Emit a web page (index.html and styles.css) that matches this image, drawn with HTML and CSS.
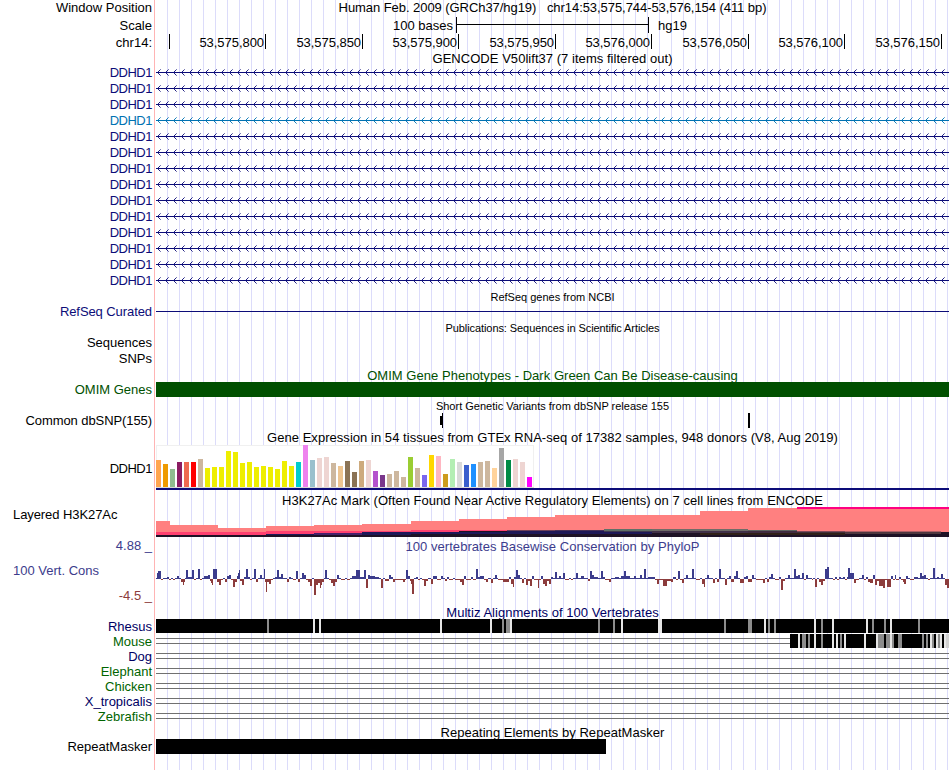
FILE: index.html
```html
<!DOCTYPE html>
<html lang="en">
<head>
    <meta charset="UTF-8">
    <meta name="viewport" content="width=device-width, initial-scale=1.0">
    <title>Human chr14:53,575,744-53,576,154 Genome Browser hg19</title>
    <link rel="stylesheet" href="styles.css">
</head>
<body>
    <main class="browser">
        <div class="row window-row">
            <div class="label">Window Position</div>
            <div class="title position">Human Feb. 2009 (GRCh37/hg19) &nbsp; chr14:53,575,744-53,576,154 (411 bp)</div>
        </div>
        <div class="row ruler-row">
            <div class="label">Scale</div>
            <div class="scale">
                <span class="scale-text">100 bases</span>
                <span class="scale-bar"></span>
                <span>hg19</span>
            </div>
        </div>
        <div class="row ruler-row">
            <div class="label">chr14:</div>
            <div class="coords" id="coords"></div>
        </div>

        <div class="row gencode-title">
            <div class="label"></div>
            <div class="title">GENCODE V50lift37 (7 items filtered out)</div>
        </div>
        <div id="genes"></div>

        <div class="row refseq-title">
            <div class="label"></div>
            <div class="title small">RefSeq genes from NCBI</div>
        </div>
        <div class="row gene-row navy">
            <div class="label tight">RefSeq Curated</div>
            <div class="intron"></div>
        </div>

        <div class="row pubs-title">
            <div class="label"></div>
            <div class="title small pubs">Publications: Sequences in Scientific Articles</div>
        </div>
        <div class="row pubs-row"><div class="label">Sequences</div></div>
        <div class="row pubs-row"><div class="label">SNPs</div></div>

        <div class="row omim-title green">
            <div class="label"></div>
            <div class="title">OMIM Gene Phenotypes - Dark Green Can Be Disease-causing</div>
        </div>
        <div class="row block-row green">
            <div class="label">OMIM Genes</div>
            <div class="block omim"></div>
        </div>

        <div class="row snp-title">
            <div class="label"></div>
            <div class="title small">Short Genetic Variants from dbSNP release 155</div>
        </div>
        <div class="row block-row">
            <div class="label tight">Common dbSNP(155)</div>
            <svg class="track" width="793" height="15">
                <rect x="284" y="3" width="2" height="9"/>
                <rect x="286" y="0" width="1" height="15"/>
                <rect x="592" y="0" width="2" height="15"/>
            </svg>
        </div>

        <div class="row gtex-title">
            <div class="label"></div>
            <div class="title">Gene Expression in 54 tissues from GTEx RNA-seq of 17382 samples, 948 donors (V8, Aug 2019)</div>
        </div>
        <div class="row gtex-row">
            <div class="label ddhd1">DDHD1</div>
            <svg class="track" id="gtex" width="793" height="45"></svg>
        </div>

        <div class="row h3k-title">
            <div class="label"></div>
            <div class="title">H3K27Ac Mark (Often Found Near Active Regulatory Elements) on 7 cell lines from ENCODE</div>
        </div>
        <div class="row h3k-row">
            <div class="label wide tight">Layered H3K27Ac</div>
            <svg class="track" id="h3k" width="793" height="30"></svg>
        </div>

        <div class="row cons-title blue">
            <div class="label">4.88 _</div>
            <div class="title">100 vertebrates Basewise Conservation by PhyloP</div>
        </div>
        <div class="row cons-row">
            <div class="cons-labels">
                <div class="label wide blue">100 Vert. Cons</div>
                <div class="label red">-4.5 _</div>
            </div>
            <svg class="track" id="phylop" width="793" height="50"></svg>
        </div>

        <div class="row multiz-title dark">
            <div class="label"></div>
            <div class="title">Multiz Alignments of 100 Vertebrates</div>
        </div>
        <div id="multiz"></div>

        <div class="row rmsk-title">
            <div class="label"></div>
            <div class="title">Repeating Elements by RepeatMasker</div>
        </div>
        <div class="row block-row">
            <div class="label">RepeatMasker</div>
            <div class="block rmsk"></div>
        </div>
    </main>
    <script src="tracks.js"></script>
</body>
</html>
```
FILE: styles.css
```css
* {
    box-sizing: border-box;
}

body {
    margin: 0;
    background: #fff;
    color: #000;
    font: 13px/16px "Liberation Sans", Arial, Helvetica, sans-serif;
    overflow: hidden;
}

/* pink line at the label edge, pale blue guide every 12px */
.browser {
    width: 949px;
    height: 770px;
    background:
        linear-gradient(#ffb4b4, #ffb4b4) 154px 0 / 1px 100% no-repeat,
        repeating-linear-gradient(to right, transparent 0 11px, #dcdcfa 11px 12px) 156px 0 / 793px 100% no-repeat;
}

.row {
    display: grid;
    grid-template-columns: 152px 793px;
    column-gap: 4px;
}

.label {
    text-align: right;
    white-space: nowrap;
}

.label.wide {
    text-align: left;
    padding-left: 13px;
}

.label.tight {
    letter-spacing: -0.08px;
}

.label.ddhd1 {
    letter-spacing: -0.5px;
    padding-right: 0;
}

.title {
    text-align: center;
    white-space: nowrap;
    letter-spacing: 0.04px;
}

.title.small {
    font-size: 11px;
    letter-spacing: 0;
}

.title.pubs {
    letter-spacing: -0.08px;
}

.title.position {
    letter-spacing: -0.06px;
}

.track {
    display: block;
    shape-rendering: crispEdges;
}

.navy { color: #0c0c78; }
.light { color: #0072b2; }
.green { color: #005000; }
.blue { color: #3c3c8c; }
.red { color: #8c3c3c; }
.dark { color: #000064; }
.mid-green { color: #006400; }

/* ruler */
.window-row {
    height: 17px;
    line-height: 16px;
}

.ruler-row {
    height: 17px;
    line-height: 17px;
}

.scale {
    display: flex;
    padding-left: 237px;
}

.scale-text {
    width: 63px;
}

.scale-bar {
    width: 193px;
    height: 16px;
    margin-right: 9px;
    border: solid #000;
    border-width: 0 1px;
    background: linear-gradient(#000, #000) 0 7px / 100% 1px no-repeat;
}

.coords {
    display: flex;
    height: 15px;
}

.coords span {
    text-align: right;
    padding-right: 1px;
    letter-spacing: -0.05px;
    border-right: 1px solid #000;
}

/* genes */
.gene-row {
    height: 16px;
    line-height: 17px;
}

.intron {
    height: 1px;
    margin-top: 8px;
    background: currentColor;
}

.pubs-row {
    height: 16px;
    line-height: 16px;
}

/* track titles */
.gencode-title { height: 13px; line-height: 15px; }
.refseq-title { height: 15px; line-height: 18px; }
.pubs-title { height: 16px; line-height: 18px; }
.omim-title { height: 15px; line-height: 17px; }
.snp-title { height: 16px; line-height: 18px; }
.gtex-title { height: 17px; line-height: 19px; }
.h3k-title { height: 17px; line-height: 22px; }
.cons-title { height: 17px; line-height: 19px; }
.multiz-title { height: 15px; line-height: 17px; }
.rmsk-title { height: 15px; line-height: 17px; }

.cons-title .label {
    line-height: 18px;
}

.block-row {
    height: 15px;
    line-height: 15px;
}

.block {
    height: 15px;
}

.omim { background: #005000; }

.rmsk {
    width: 450px;
    background: #000;
}

.gtex-row {
    height: 45px;
    line-height: 47px;
}

.h3k-row {
    height: 30px;
    line-height: 16px;
}

.cons-row {
    height: 50px;
}

.cons-labels {
    display: flex;
    flex-direction: column;
    gap: 9px;
    padding-top: 9px;
}

.align-row {
    height: 15px;
    line-height: 16px;
}
```
FILE: tracks.js
```
const WIDTH = 793;

function rect(x, y, w, h, fill) {
    return `<rect x="${x}" y="${y}" width="${w}" height="${h}" fill="${fill}"/>`;
}

// chromosome ruler: [cell width, text]
const COORDS = [
    [14, ''], [96, '53,575,800'], [97, '53,575,850'], [96, '53,575,900'],
    [97, '53,575,950'], [96, '53,576,000'], [97, '53,576,050'],
    [96, '53,576,100'], [97, '53,576,150']
];
document.getElementById('coords').innerHTML = COORDS
    .map(([w, text]) => `<span style="width:${w}px">${text}</span>`).join('');

// GENCODE transcripts, all on the minus strand
function intronArrows() {
    let arms = '', tips = '';
    for (let x = 1; x < WIDTH; x += 8) {
        for (let i = 1; i <= 2; i++) {
            arms += `M${x + i} ${8 - i}h1v1h-1zM${x + i} ${8 + i}h1v1h-1z`;
        }
        tips += `M${x + 3} 5h1v1h-1zM${x + 3} 11h1v1h-1z`;
    }
    return `<svg class="track" width="${WIDTH}" height="16" fill="currentColor">
        <rect y="8" width="${WIDTH}" height="1"/>
        <path d="${arms}" opacity="0.9"/><path d="${tips}" opacity="0.55"/></svg>`;
}
let genes = '';
for (let i = 0; i < 14; i++) {
    genes += `<div class="row gene-row ${i === 3 ? 'light' : 'navy'}">
        <div class="label ddhd1">DDHD1</div>${intronArrows()}</div>`;
}
document.getElementById('genes').innerHTML = genes;

// GTEx: color, bar height
const GTEX = [
    ['#ffa54f', 27], ['#ee9a00', 23], ['#8fbc8f', 18], ['#8b1c62', 25], ['#ee6a50', 25], ['#ff0000', 25],
    ['#cdb79e', 28], ['#eeee00', 19], ['#eeee00', 20], ['#eeee00', 20], ['#eeee00', 36], ['#eeee00', 35],
    ['#eeee00', 24], ['#eeee00', 25], ['#eeee00', 20], ['#eeee00', 21], ['#eeee00', 20], ['#eeee00', 18],
    ['#eeee00', 26], ['#eeee00', 21], ['#00cdcd', 25], ['#ee82ee', 42], ['#9ac0cd', 27], ['#eed5d2', 29],
    ['#eed5d2', 30], ['#cdb79e', 24], ['#eec591', 21], ['#8b7355', 26], ['#8b7355', 15], ['#cdaa7d', 26],
    ['#eed5d2', 27], ['#b452cd', 16], ['#7a378b', 12], ['#cdb79e', 13], ['#cdb79e', 16], ['#cdb79e', 10],
    ['#9acd32', 30], ['#cdb79e', 19], ['#7a67ee', 12], ['#ffd700', 32], ['#ffb6c1', 31], ['#cd9b1d', 13],
    ['#b4eeb4', 28], ['#d9d9d9', 25], ['#3a5fcd', 22], ['#1e90ff', 23], ['#cdb79e', 25], ['#cdb79e', 26],
    ['#ffd39b', 19], ['#a6a6a6', 39], ['#008b45', 27], ['#eed5d2', 28], ['#eed5d2', 25], ['#ff00ff', 10]
];
let gtex = rect(0, 0, 378, 43, '#f0f0f0') + rect(1, 1, 376, 41, '#fff') + rect(0, 42, 378, 1, '#d8d8d8');
GTEX.forEach(([color, h], i) => {
    gtex += rect(i * 7, 42 - h, 5, h, color);
});
gtex += rect(0, 43, WIDTH, 2, '#0c0c78');
document.getElementById('gtex').innerHTML = gtex;

// H3K27Ac: segment start, then [top, color] layers down to the base
const SALMON = '#ff8080', PINK = '#ff4070', INK = '#1e1226', NAVY = '#1e1858';
const H3K = [
    [0, [14, SALMON], [25, PINK], [28, INK]],
    [14, [18, SALMON], [25, PINK], [28, INK]],
    [62, [21, SALMON], [25, PINK], [28, INK]],
    [110, [19, SALMON], [24, PINK], [27, NAVY], [28, INK]],
    [158, [18, SALMON], [24, PINK], [26, '#46206a'], [28, INK]],
    [206, [17, SALMON], [24, PINK], [25, NAVY], [28, INK]],
    [255, [14, SALMON], [23, PINK], [25, NAVY], [27, INK]],
    [303, [12, SALMON], [23, PINK], [24, INK], [25, NAVY], [27, INK]],
    [351, [10, SALMON], [23, '#704058'], [24, NAVY], [27, INK]],
    [399, [8, SALMON], [23, '#483058'], [24, NAVY], [27, INK]],
    [448, [8, SALMON], [22, '#607068'], [24, '#403850'], [25, NAVY], [27, INK]],
    [496, [8, SALMON], [22, '#706c68'], [24, '#403048'], [26, INK]],
    [544, [4, SALMON], [22, '#706c68'], [24, '#403048'], [26, '#302018'], [28, INK]],
    [592, [1, SALMON], [23, '#606460'], [24, '#402c40'], [26, '#302018'], [28, INK]],
    [641, [0, '#ff0080'], [2, SALMON], [24, '#804858'], [25, '#403038'], [26, '#302018'], [28, INK]],
    [689, [0, '#ff0080'], [2, SALMON], [24, '#b06068'], [25, '#503840'], [27, INK]],
    [785, [0, '#ff0080'], [2, SALMON], [25, INK]]
];
let h3k = '';
H3K.forEach(([x, ...layers], i) => {
    const end = i + 1 < H3K.length ? H3K[i + 1][0] : WIDTH;
    layers.forEach(([y, color]) => {
        h3k += rect(x, y, end - x, 30 - y, color);
    });
});
document.getElementById('h3k').innerHTML = h3k;

// PhyloP: start:score, each score runs up to the next start
const PHYLOP = `0:1 1:6 2:8 5:-1 7:1 11:2 13:-1 15:1 17:-1 19:1 21:3 23:1 25:-3 27:-6 28:-3 29:1 30:9 32:2 36:9
38:-1 40:1 42:10 44:-1 46:1 48:3 52:4 54:-2 55:-4 56:-6 57:10 61:-3 63:-6 65:-1 67:1 69:-3 71:3 73:4 75:-1
77:-8 79:-3 81:3 82:6 83:9 84:-2 86:-6 88:2 90:10 92:2 94:-1 96:1 98:10 100:-3 102:1 104:4 106:1 108:10
109:-3 110:-13 111:-3 113:-5 115:-1 117:1 119:2 121:9 123:2 125:5 127:1 131:-3 133:2 135:1 137:-1 140:8
142:-3 144:1 146:6 148:4 150:-1 152:-3 154:-7 156:1 158:-16 160:-6 162:-4 164:-9 165:-6 166:-3 168:1 169:9
171:1 173:-1 175:-4 177:-7 179:-3 181:4 183:1 185:-1 189:1 191:-1 194:1 196:3 200:9 204:2 208:9 210:-9 212:4
214:3 219:2 223:1 225:-9 227:1 229:-2 233:4 235:2 237:-3 239:-1 247:-3 249:-1 250:9 252:3 254:-2 255:-5
256:-15 258:1 260:2 262:-1 264:1 266:-1 268:-7 270:-2 272:1 275:-5 277:3 281:-1 285:3 287:1 289:-2 291:2
293:-1 297:1 299:-1 304:-3 306:-6 308:3 310:-1 315:2 317:-1 320:10 322:2 324:3 328:-1 330:-3 332:1 335:-4
337:1 339:4 341:1 342:-1 347:-3 353:2 355:-5 357:-8 358:2 360:9 362:4 364:1 366:-4 368:1 370:-6 372:-2
374:-7 376:3 378:-1 382:-9 383:-1 385:3 387:-5 389:-7 391:-2 393:-5 395:2 397:1 399:7 401:1 403:3 405:1
407:6 409:-1 413:1 415:-1 417:1 420:6 422:1 425:3 428:1 432:-2 434:8 436:4 438:2 442:1 445:8 447:2 449:-1
453:-3 455:1 459:2 463:1 465:3 468:8 470:3 474:1 478:3 480:1 484:4 486:1 488:10 490:1 492:2 499:-1 501:-5
503:-1 507:-7 511:-2 515:-3 517:2 520:-1 522:8 524:-1 526:-4 528:1 530:4 532:1 536:10 538:1 540:-1 544:1
546:-5 548:-8 549:1 551:4 553:1 557:-4 559:1 561:-3 563:10 565:1 569:-6 571:1 573:3 575:-3 578:3 580:8
582:1 584:-4 588:2 590:3 592:-3 596:4 598:1 600:-1 607:-4 609:1 611:-3 613:2 615:5 617:1 619:-1 623:2
625:-11 627:-2 629:1 632:4 634:1 638:10 640:3 642:4 644:1 646:6 648:-1 650:4 652:1 656:-1 657:1 659:-8
661:1 663:-3 665:-6 667:-2 669:10 671:12 673:1 677:-1 679:2 681:-1 683:2 685:1 687:2 689:-1 691:2 692:11
694:6 698:-4 700:-1 703:1 706:4 708:-1 710:2 712:-3 714:-4 717:4 719:-6 721:-2 723:-7 727:-9 729:-1 731:-8
735:3 737:-1 739:4 740:-1 743:2 745:-1 747:-3 748:-5 750:3 752:1 754:-1 758:2 762:1 764:6 766:3 768:4 770:1
772:-1 774:1 777:11 779:1 781:2 783:1 785:5 787:1 789:-6 791:-9 793:0`
    .split(/\s+/).map(p => p.split(':').map(Number));
let phylop = '';
for (let i = 0; i < PHYLOP.length - 1; i++) {
    const [x, score] = PHYLOP[i];
    const w = PHYLOP[i + 1][0] - x;
    phylop += score > 0
        ? rect(x, 25 - score, w, score, '#3c3c8c')
        : rect(x, 25, w, -score, '#8c3c3c');
}
document.getElementById('phylop').innerHTML = phylop;

// Multiz: [x, width, color] marks over the black aligned block
const G = '#8c8c8c', L = '#e6e6e6';
const SPECIES = [
    { name: 'Rhesus', cls: 'dark', start: 0, marks: [
        [111, 2, G], [157, 2, L], [163, 2, L], [284, 2, L], [334, 2, L], [346, 2, G], [350, 4, G], [354, 2, L],
        [442, 2, G], [457, 2, G], [465, 2, L], [502, 4, L], [568, 2, G], [592, 4, G], [608, 2, L], [612, 2, G],
        [618, 2, G], [658, 2, L], [665, 2, G], [676, 2, L], [710, 2, L], [716, 2, G], [728, 2, G], [734, 2, L],
        [762, 2, G]] },
    { name: 'Mouse', cls: 'mid-green', start: 634, marks: [
        [642, 2, L], [646, 4, G], [652, 2, G], [658, 2, L], [665, 2, G], [676, 2, L], [680, 2, L], [684, 2, G],
        [688, 2, L], [708, 2, L], [720, 2, L], [722, 6, G], [730, 4, G], [734, 2, L], [736, 2, G], [742, 4, G],
        [766, 2, G], [770, 2, G], [774, 2, L], [776, 2, G], [780, 2, L], [782, 2, G], [784, 2, L], [788, 2, L],
        [790, 3, '#d0d0d0']] },
    { name: 'Dog', cls: 'dark' },
    { name: 'Elephant', cls: 'mid-green' },
    { name: 'Chicken', cls: 'mid-green' },
    { name: 'X_tropicalis', cls: 'dark' },
    { name: 'Zebrafish', cls: 'mid-green' }
];
document.getElementById('multiz').innerHTML = SPECIES.map(({ name, cls, start = WIDTH, marks = [] }) => {
    let svg = rect(0, 4, start, 1, '#707070') + rect(0, 9, start, 1, '#707070');
    svg += rect(start, 0, WIDTH - start, 14, '#000');
    marks.forEach(([x, w, color]) => { svg += rect(x, 0, w, 14, color); });
    return `<div class="row align-row ${cls}">
        <div class="label">${name}</div>
        <svg class="track" width="${WIDTH}" height="15">${svg}</svg></div>`;
}).join('');
```
